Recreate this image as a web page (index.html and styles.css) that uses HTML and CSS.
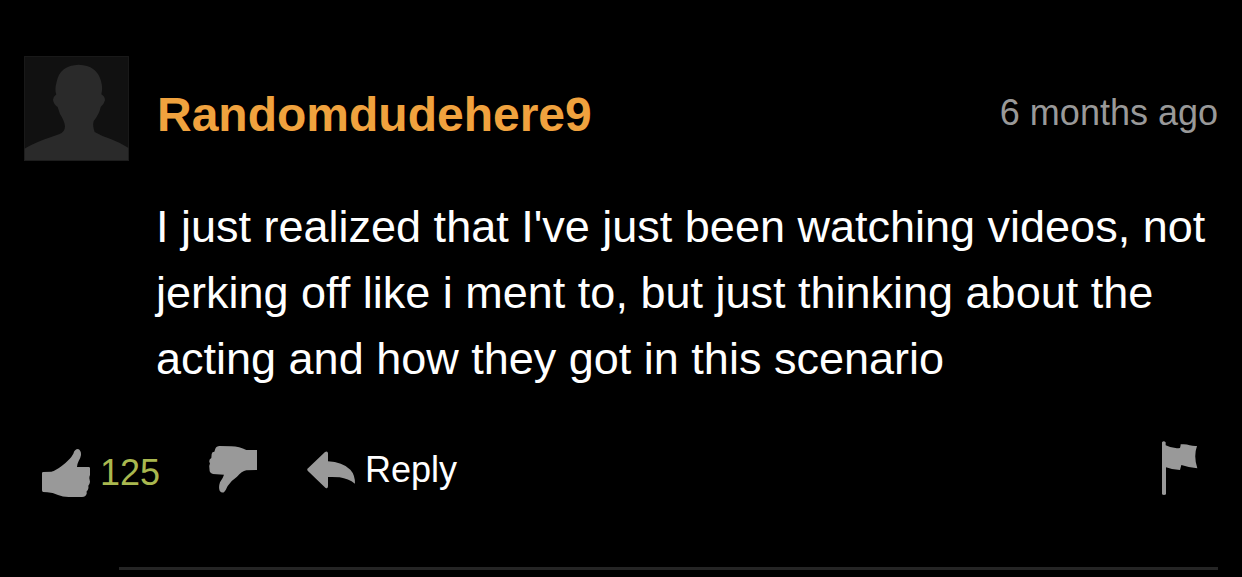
FILE: index.html
```
<!DOCTYPE html>
<html lang="en">
    <head>
        <meta charset="UTF-8">
        <title>Comments</title>
        <link rel="stylesheet" href="styles.css">
    </head>
    <body>
        <div class="comment">
            <div class="head">
                <svg class="avatar" viewBox="0 0 315 315" aria-hidden="true">
                    <rect width="315" height="315" fill="#111"/>
                    <path d="M0 315V279Q20 266 58 251L105 235Q123 229 123 210Q121 194 108 174L101 153Q90 147 87 132Q88 122 97 115Q91 103 98 77Q108 28 164 26Q219 28 231 75Q237 97 232 115Q243 121 243 133Q239 147 230 153Q226 174 209 195Q205 211 212 228Q232 240 260 249Q292 261 315 277V315Z" fill="#2a2a2a"/>
                    <path d="M1 1H314V314H1Z" fill="none" stroke="#1c1c1c" stroke-width="3"/>
                </svg>
                <a class="name" href="#">Randomdudehere9</a>
                <span class="date">6 months ago</span>
            </div>
            <p class="text">I just realized that I've just been watching videos, not jerking off like i ment to, but just thinking about the acting and how they got in this scenario</p>
            <div class="actions">
                <button class="up" type="button" aria-label="Like, 125">
                    <svg width="48" height="48" viewBox="0 0 144 144"><path d="M0 72Q0 69 4 69L28 68Q42 64 60 50Q86 30 94 14Q98 0 108 0Q118 4 117 18Q116 26 110 36Q105 46 105 54H140Q144 54 144 58V78Q142 82 142 88L144 98Q143 106 139 110Q141 118 137 124L134 127Q136 137 130 141Q126 144 120 144H80Q62 144 48 138Q32 131 16 130L3 129Q0 128 0 124Z"/></svg>
                    <span>125</span>
                </button>
                <button class="down" type="button" aria-label="Dislike">
                    <svg width="48" height="48" viewBox="0 0 144 144"><path d="M144 12H112Q92 2 66 1L32 0Q22 0 19 8L16 17Q9 17 8 24L7 36Q0 39 1 47L3 53Q0 58 1 64L2 76Q4 83 12 84L45 86Q42 96 33 109Q28 124 32 134Q37 142 45 139Q50 134 56 120Q66 104 84 92Q98 76 112 73L144 72Z"/></svg>
                </button>
                <button class="reply" type="button">
                    <svg width="48" height="38" viewBox="0 0 144 114"><path d="M2 59Q-1 55 3 52L54 3Q62 -2 63 7V31Q106 33 130 56Q144 71 144 98Q124 83 98 79Q82 77 63 78V106Q62 115 55 110Z"/></svg>
                    <span>Reply</span>
                </button>
                <button class="flag" type="button" aria-label="Report">
                    <svg width="36" height="54" viewBox="0 0 108 162"><path d="M0 4Q5-2 11 4V13Q32 24 54 21Q56 15 56 10Q72 8 83 13Q94 16 105 15Q94 46 106 82Q82 80 58 72L54 87Q32 87 12 79V160Q6 164 0 160Z"/></svg>
                </button>
            </div>
            <hr class="line">
        </div>
    </body>
</html>
```
FILE: styles.css
```
*{ margin:0; padding:0; box-sizing:border-box; }
body{
    background: #000;
    color: #fff;
    font-family: "Liberation Sans",Arial,sans-serif;
}
a{
    text-decoration: none;
}
button{
    display: flex;
    align-items: center;
    border: 0;
    background: none;
    color: #fff;
    font: inherit;
    cursor: pointer;
}
button svg{
    display: block;
    fill: #999;
}
.comment{
    padding: 56px 24px 0;
}
.head{
    display: flex;
    align-items: center;
}
.avatar{
    width: 105px;
    height: 105px;
    margin-right: 28px;
}
.name{
    padding-top: 12px;
    color: #f0a23e;
    font-size: 48px;
    font-weight: bold;
}
.date{
    margin-left: auto;
    padding-top: 8px;
    color: #999;
    font-size: 36px;
}
.text{
    margin: 33px 0 0 132px;
    font-size: 45px;
    line-height: 66px;
}
.actions{
    display: flex;
    align-items: center;
    height: 54px;
    margin-top: 49px;
    padding: 0 20px 0 18px;
    font-size: 36px;
}
.up{
    gap: 10px;
    padding-top: 10px;
    color: #a9b84f;
}
.down{
    margin-left: 49px;
    padding-top: 4px;
}
.reply{
    gap: 10px;
    margin-left: 50px;
    padding-top: 4px;
}
.flag{
    margin-left: auto;
}
.line{
    height: 3px;
    margin: 72px 0 0 95px;
    border: 0;
    background: #252525;
}
```
